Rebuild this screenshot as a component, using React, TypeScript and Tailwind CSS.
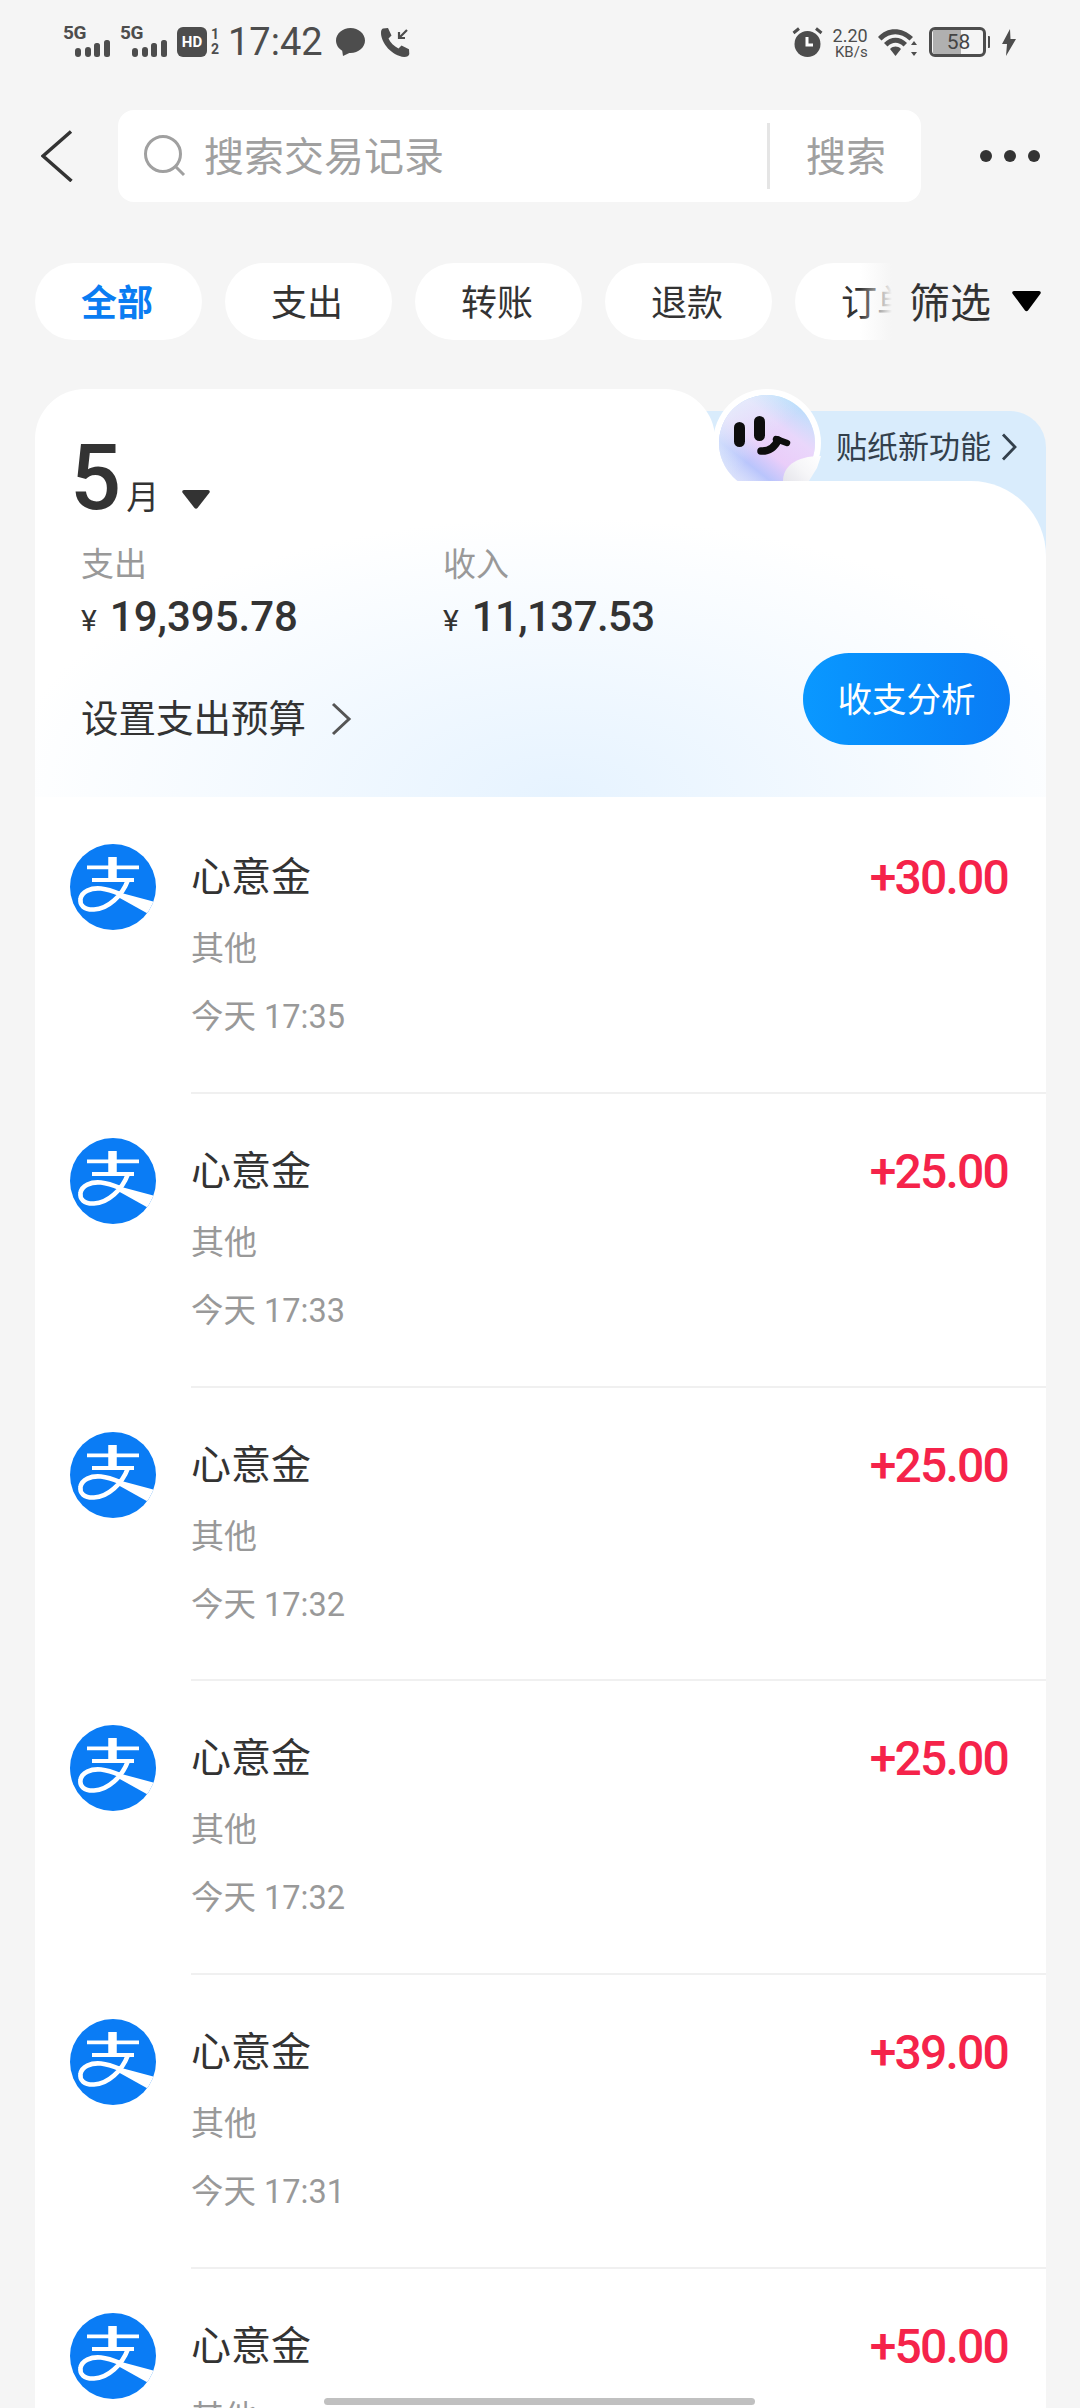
import React from "react";

const font = "[font-family:Roboto,'Noto_Sans_CJK_SC',sans-serif]";

function Signal({ className = "" }: { className?: string }) {
  return (
    <div className={`relative w-[47px] h-[32px] ${className}`}>
      <span className="absolute left-0 top-[-4px] text-[19px] leading-[20px] font-bold text-[#4d4d4d] tracking-[-0.5px]">5G</span>
      <svg className="absolute left-[12px] top-[13px]" width="35" height="17" viewBox="0 0 35 17" fill="#4d4d4d">
        <rect x="0" y="8" width="6" height="9" rx="3" />
        <rect x="10" y="7" width="6" height="10" rx="3" />
        <rect x="19" y="3" width="6" height="14" rx="2.5" />
        <rect x="29" y="0" width="6" height="17" rx="2.5" />
      </svg>
    </div>
  );
}

function StatusBar() {
  return (
    <div className="h-[110px] pt-[27px] flex items-start text-[#4d4d4d]">
      <Signal className="ml-[63px]" />
      <Signal className="ml-[10px]" />
      <div className="ml-[10px] w-[30px] h-[30px] rounded-[6px] bg-[#4d4d4d] flex items-center justify-center text-white text-[15px] font-bold leading-none">HD</div>
      <div className="ml-[3px] w-[10px] h-[30px] flex flex-col items-center text-[14px] font-bold leading-[15px]">
        <span>1</span>
        <span>2</span>
      </div>
      <span className="ml-[8px] text-[38px] leading-[30px]">17:42</span>
      <svg className="ml-[12px]" width="31" height="30" viewBox="0 0 31 30" fill="#4d4d4d">
        <path d="M15.5 1C7.5 1 1 6.6 1 13.6c0 4.3 2.5 8 6.2 10.2L8 29l6.3-3.1c.4 0 .8.1 1.2.1 8 0 14.5-5.500 14.5-12.400S23.500 1 15.500 1z" />
      </svg>
      <svg className="ml-[14px]" width="31" height="31" viewBox="0 0 31 31" fill="none">
        <path d="M3 1.500 8 1l3.500 7.500-3 3c1.800 4 5.500 7.800 10 10l3-3 7.500 3.800.300 4.700c-.3 2-2.300 3-5 3C12 29 1 16 1 6c0-2.500.7-4 2-4.500z" fill="#4d4d4d" />
        <path d="M27 3l-7.500 7.500M19 5v6h6" stroke="#4d4d4d" strokeWidth="2.200" />
      </svg>
      <svg className="ml-[381px]" width="31" height="30" viewBox="0 0 31 30" fill="none">
        <circle cx="15.500" cy="17" r="13" fill="#4d4d4d" />
        <path d="M15 10v8h6" stroke="#fff" strokeWidth="3" />
        <path d="M1.500 6 7 1.500M29.500 6 24 1.500" stroke="#4d4d4d" strokeWidth="3" />
      </svg>
      <div className="ml-[6px] w-[39px] flex flex-col items-end leading-none">
        <span className="text-[18px] leading-[17px]">2.20</span>
        <span className="text-[15px] leading-[14px] mt-[1px]">KB/s</span>
      </div>
      <svg className="ml-[10px] mt-[2px]" width="39" height="28" viewBox="0 0 39 28" fill="#4d4d4d">
        <path d="M0 8C9-2.500 24-2.500 35 8l-3.500 3.500C22.500 3 12 3 3.500 11.500z" />
        <path d="M6 14c7-7 16-7 23 0l-3.500 3.500c-5-5-11-5-16 0z" />
        <path d="M12 20c3.500-3.200 7.500-3.200 11 0l-5.500 7z" />
        <path d="M36 12l3 4h-6zM36 27l3-4h-6z" />
      </svg>
      <div className="ml-[12px] relative w-[57px] h-[30px] rounded-[6px] border-[3px] border-[#4d4d4d] overflow-hidden">
        <div className="h-full w-[28px] ml-[1px] bg-[#b0b0b0]" />
        <span className="absolute left-[15px] top-0 text-[21px] leading-[24px] text-[#444444]">58</span>
      </div>
      <div className="ml-[2px] mt-[9px] w-[2px] h-[12px] bg-[#4d4d4d] rounded-r-[1px]" />
      <svg className="ml-[12px] mt-[2px]" width="14" height="27" viewBox="0 0 14 27" fill="#4d4d4d">
        <path d="M8 0 0 15h5l-1 12 10-17H8.500z" />
      </svg>
    </div>
  );
}

function SearchRow() {
  return (
    <div className="h-[92px] flex items-center">
      <svg className="ml-[41px]" width="32" height="52" viewBox="0 0 32 52" fill="none">
        <path d="M30 1.500 2 26l28.500 25" stroke="#333333" strokeWidth="3.500" />
      </svg>
      <div className="ml-[45px] w-[803px] h-[92px] bg-white rounded-[16px] flex items-center">
        <svg className="ml-[25px]" width="44" height="44" viewBox="0 0 44 44" fill="none">
          <circle cx="20" cy="20" r="17.500" stroke="#a0a0a0" strokeWidth="3" />
          <path d="M32 32l9 9" stroke="#a0a0a0" strokeWidth="3" />
        </svg>
        <span className="ml-[17px] mt-[4px] text-[40px] leading-none text-[#a0a0a0] flex-1">搜索交易记录</span>
        <div className="w-[3px] h-[66px] bg-[#e5e5e5]" />
        <span className="ml-[36px] mr-[35px] mt-[4px] text-[40px] leading-none text-[#a0a0a0]">搜索</span>
      </div>
      <div className="ml-[59px] flex gap-[12px]">
        <div className="w-[12px] h-[12px] rounded-full bg-[#333333]" />
        <div className="w-[12px] h-[12px] rounded-full bg-[#333333]" />
        <div className="w-[12px] h-[12px] rounded-full bg-[#333333]" />
      </div>
    </div>
  );
}

function Pill({ label, active }: { label: string; active?: boolean }) {
  return (
    <div
      className={`w-[167px] h-[77px] shrink-0 rounded-full bg-white flex items-center justify-center pt-[4px] pr-[3px] text-[36px] leading-none ${
        active ? "text-[#0a7cf2] font-bold" : "text-[#333333]"
      }`}
    >
      {label}
    </div>
  );
}

function Tabs() {
  return (
    <div className="relative mt-[61px] h-[77px] pl-[35px] flex gap-[23px] overflow-hidden">
      <Pill label="全部" active />
      <Pill label="支出" />
      <Pill label="转账" />
      <Pill label="退款" />
      <Pill label="订单" />
      <div className="absolute right-0 top-0 h-full w-[220px] flex items-center">
        <div className="w-[32px] h-full bg-gradient-to-r from-[#f5f5f500] to-[#f5f5f5]" />
        <div className="flex-1 h-full bg-[#f5f5f5] flex items-center pl-[17px]">
          <span className="mt-[5px] text-[41px] leading-none text-[#333333]">筛选</span>
          <svg className="ml-[21px]" width="29" height="21" viewBox="0 0 29 21" fill="#000000">
            <path d="M2 0h25c1.500 0 2.300 1.500 1.400 2.700L16 19.500c-.8 1-2.200 1-3 0L.6 2.700C-.3 1.500.5 0 2 0z" />
          </svg>
        </div>
      </div>
    </div>
  );
}

function Sticker() {
  return (
    <svg className="absolute left-[678px] top-0" width="108" height="108" viewBox="0 0 108 108">
      <defs>
        <linearGradient id="s1" x1="0.500" y1="0" x2="0.500" y2="1">
          <stop offset="0" stopColor="#9be0fc" />
          <stop offset="0.500" stopColor="#d5e6fb" />
          <stop offset="1" stopColor="#d9dcfb" />
        </linearGradient>
        <linearGradient id="s2" x1="1" y1="0.100" x2="0.300" y2="1">
          <stop offset="0" stopColor="#c5d8fb" stopOpacity="0.300" />
          <stop offset="0.350" stopColor="#ecd5fb" />
          <stop offset="0.600" stopColor="#eccbf9" />
          <stop offset="0.800" stopColor="#b6c2fc" />
          <stop offset="1" stopColor="#dfe4fb" stopOpacity="0.600" />
        </linearGradient>
        <linearGradient id="s3" x1="0" y1="0" x2="1" y2="1">
          <stop offset="0" stopColor="#e6f3fc" />
          <stop offset="0.500" stopColor="#e6f3fc" stopOpacity="0" />
        </linearGradient>
        <linearGradient id="s4" x1="0" y1="1" x2="1" y2="0">
          <stop offset="0" stopColor="#dcdce4" />
          <stop offset="0.600" stopColor="#f6f6f8" />
          <stop offset="1" stopColor="#ffffff" />
        </linearGradient>
      </defs>
      <rect x="0" y="54" width="54" height="54" fill="#ffffff" />
      <circle cx="54" cy="54" r="54" fill="#ffffff" />
      <circle cx="54" cy="54" r="48" fill="url(#s1)" />
      <circle cx="54" cy="54" r="48" fill="url(#s2)" opacity="0.900" />
      <circle cx="54" cy="54" r="48" fill="url(#s3)" />
      <rect x="21" y="33" width="11" height="25" rx="5.500" fill="#0d0d0d" />
      <rect x="41" y="27" width="11" height="25" rx="5.500" fill="#0d0d0d" />
      <path d="M48 62c8 .5 14-4 17-11" fill="none" stroke="#0d0d0d" strokeWidth="7.500" strokeLinecap="round" />
      <path d="M63 50l11 4" fill="none" stroke="#0d0d0d" strokeWidth="6.500" strokeLinecap="round" />
      <path d="M70 108V92c0-14 12-25 38-25l-4 12-18 29z" fill="url(#s4)" />
    </svg>
  );
}

function AlipayLogo() {
  return (
    <svg className="shrink-0" width="86" height="86" viewBox="0 0 86 86">
      <defs>
        <clipPath id="alipay-c">
          <circle cx="43" cy="43" r="43" />
        </clipPath>
      </defs>
      <circle cx="43" cy="43" r="43" fill="#0a7cf5" />
      <g clipPath="url(#alipay-c)" fill="none" stroke="#ffffff">
        <path d="M17 23.300h52" strokeWidth="3.800" />
        <path d="M42.500 13v22" strokeWidth="8.500" />
        <path d="M22 36h42" strokeWidth="4" />
        <path d="M58 36C52 52 38 65 24 65.500 14 66 9.500 61 10.500 55 11.500 47.500 21 43.500 31 44.500 40 45.500 46 48.500 52 51" strokeWidth="4.600" />
        <path d="M44 47 87 58.500 78.500 70 48 53z" fill="#ffffff" stroke="none" />
      </g>
    </svg>
  );
}

function Row({ amount, time }: { amount: string; time?: string }) {
  return (
    <div className="h-[293.750px] pl-[35px] pt-[44px] flex">
      <AlipayLogo />
      <div className="ml-[35px] flex-1 pr-[38px] border-b-[2px] border-[#f0f0f0] flex justify-between">
        <div className="pt-[9px]">
          <div className="text-[40px] leading-[50px] text-[#333333]">心意金</div>
          <div className="mt-[23px] text-[33px] leading-[46px] text-[#999999]">其他</div>
          {time && <div className="mt-[22px] text-[32.500px] leading-[46px] text-[#999999]">今天 {time}</div>}
        </div>
        <div className="pt-[9px] text-[48px] leading-[50px] font-medium text-[#f5234a] tracking-[-1.800px]">{amount}</div>
      </div>
    </div>
  );
}

function Summary() {
  return (
    <div className="flow-root h-[316px] pl-[41px] pr-[36px] rounded-tr-[75px] bg-[radial-gradient(ellipse_560px_280px_at_52%_100%,#e6f3ff,#ffffff)]">
      <div className="relative -mt-[42px] h-[80px] flex items-baseline">
        <span className="-ml-[6px] text-[90px] leading-[80px] font-medium text-[#333333]">5</span>
        <span className="ml-[5px] text-[33px] leading-none text-[#333333]">月</span>
        <svg className="ml-[23px]" width="28" height="19" viewBox="0 0 28 19" fill="#333333">
          <path d="M2 0h24c1.500 0 2.300 1.500 1.400 2.700L15.500 18c-.8 1-2.200 1-3 0L.6 2.700C-.3 1.500.5 0 2 0z" />
        </svg>
      </div>
      <div className="mt-[23px] ml-[5px] flex text-[33px] leading-[46px] text-[#999999]">
        <span className="w-[362px]">支出</span>
        <span>收入</span>
      </div>
      <div className="mt-[4px] ml-[5px] flex text-[#333333] h-[50px] items-baseline">
        <div className="w-[362px] flex items-baseline">
          <span className="text-[30px] leading-none">¥</span>
          <span className="ml-[13px] text-[42px] leading-[50px] font-medium">19,395.78</span>
        </div>
        <div className="flex items-baseline">
          <span className="text-[30px] leading-none">¥</span>
          <span className="ml-[13px] text-[42px] leading-[50px] font-medium tracking-[-0.600px]">11,137.53</span>
        </div>
      </div>
      <div className="mt-[11px] flex justify-between items-start">
        <div className="ml-[5px] mt-[41px] flex items-center">
          <span className="text-[37.500px] leading-[50px] text-[#333333]">设置支出预算</span>
          <svg className="ml-[25px]" width="21" height="34" viewBox="0 0 21 34" fill="none">
            <path d="M2 2l16 15L2 32" stroke="#555555" strokeWidth="3" />
          </svg>
        </div>
        <div className="w-[207px] h-[92px] pt-[2px] rounded-full bg-gradient-to-r from-[#0a98ff] to-[#0a7cf5] flex items-center justify-center text-white text-[34.500px] leading-none">
          收支分析
        </div>
      </div>
    </div>
  );
}

function Card() {
  const rows: [string, string?][] = [
    ["+30.00", "17:35"],
    ["+25.00", "17:33"],
    ["+25.00", "17:32"],
    ["+25.00", "17:32"],
    ["+39.00", "17:31"],
    ["+50.00"],
  ];
  return (
    <div className="relative mt-[49px] ml-[35px] w-[1011px] pt-[92px]">
      <div className="absolute right-0 top-[22px] w-[340px] h-[160px] bg-[#d9ecfc] rounded-tr-[36px] flex justify-end pr-[29px] pt-[15px]">
        <span className="text-[31px] leading-[44px] text-[#33404c]">贴纸新功能</span>
        <svg className="ml-[10px] mt-[7px]" width="16" height="28" viewBox="0 0 16 28" fill="none">
          <path d="M2 1.500 14 14 2 26.500" stroke="#33404c" strokeWidth="2.800" />
        </svg>
      </div>
      <Sticker />
      <div className="absolute left-0 top-0 w-[680px] h-[100px] bg-white rounded-t-[50px]" />
      <div className="relative">
        <Summary />
        <div className="bg-white pt-[3px]">
          {rows.map(([a, t], i) => (
            <Row key={i} amount={a} time={t} />
          ))}
        </div>
      </div>
    </div>
  );
}

export default function App() {
  return (
    <div className={`relative w-[1080px] h-[2408px] overflow-hidden bg-[#f5f5f5] ${font}`}>
      <StatusBar />
      <SearchRow />
      <Tabs />
      <Card />
      <div className="absolute left-[324px] bottom-[3px] w-[431px] h-[7px] rounded-full bg-[#c0c0c0]" />
    </div>
  );
}
